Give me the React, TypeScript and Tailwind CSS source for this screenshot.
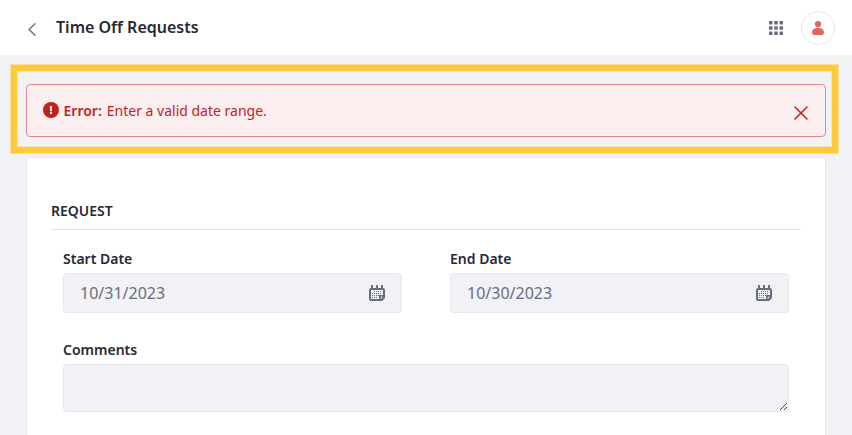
import React from "react";

const GRID = [0, 5.25, 10.5];
const DOT_ROWS: number[][] = [
  [5, 7, 9, 11],
  [3, 5, 7, 9, 11],
  [3, 5, 7, 9],
  [3, 5, 7],
];

function CalendarIcon() {
  return (
    <svg width="16" height="16" viewBox="0 0 16 16" aria-hidden="true">
      <path
        d="M2 .5a.5.5 0 0 1 .5-.5h1a.5.5 0 0 1 .5.5V3h3V.5a.5.5 0 0 1 .5-.5h1a.5.5 0 0 1 .5.5V3h3V.5a.5.5 0 0 1 .5-.5h1a.5.5 0 0 1 .5.5V3a2 2 0 0 1 2 2v8l-3 3H2a2 2 0 0 1-2-2V5a2 2 0 0 1 2-2z"
        fill="#6b6c7e"
      />
      <path d="M2 5h12v5h-4v4H2z" fill="#f1f2f5" />
      <path d="M11.700 11.700h2.300l-2.300 2.300z" fill="#f1f2f5" />
      {DOT_ROWS.map((row, r) =>
        row.map((x) => <rect key={`${r}-${x}`} x={x} y={6 + r * 2} width="1" height="1" fill="#6b6c7e" />),
      )}
    </svg>
  );
}

function DateField({ label, value }: { label: string; value: string }) {
  return (
    <div className="w-[339px]">
      <label className="block h-[21px] text-[14px] leading-[21px] font-semibold">{label}</label>
      <div className="mt-1 flex h-10 items-center justify-between rounded-[4px] border border-[#e7e7ed] bg-[#f1f2f5] px-4 text-[16px] text-[#6b6c7e]">
        <span>{value}</span>
        <CalendarIcon />
      </div>
    </div>
  );
}

export default function App() {
  return (
    <div className="h-[435px] w-[852px] overflow-hidden bg-[#f1f2f5] font-['Noto_Sans',sans-serif] text-[#272833]">
      <header className="flex h-[55px] items-center bg-white pr-[17px] pl-7">
        <svg className="mt-[3px]" width="8" height="13" viewBox="0 0 8 13" fill="none" stroke="#6b6c7e" strokeWidth="1.4" strokeLinecap="round">
          <path d="M7 .8 1 6.5l6 5.7" />
        </svg>
        <h1 className="mb-[2px] ml-5 text-[16px] leading-6 font-semibold">Time Off Requests</h1>
        <svg className="mt-px ml-auto" width="14" height="14" viewBox="0 0 14 14" fill="#6b6c7e">
          {GRID.map((y) => GRID.map((x) => <rect key={`${x}-${y}`} x={x} y={y} width="3.5" height="3.5" rx=".3" />))}
        </svg>
        <div className="ml-[18px] flex size-[34px] items-center justify-center rounded-full border border-[#e7e7ed]">
          <svg width="12" height="14" viewBox="0 0 12 14" fill="#e5655d">
            <circle cx="6" cy="3.1" r="3.1" />
            <path d="M0 11.2C0 8.5 2.7 7 6 7s6 1.5 6 4.2c0 1.9-1 2.8-2.5 2.8h-7C1 14 0 13.100 0 11.200z" />
          </svg>
        </div>
      </header>

      <div className="mt-[10px] mr-[14px] ml-[11px] h-[88px] border-[6px] border-[#ffca38] pt-[13px] pr-[6px] pl-[9px] shadow-[0_0_0_1px_#f8dea0,inset_0_0_0_1px_#f8e4b4]">
        <div role="alert" className="flex h-[53px] items-center rounded-[4px] border border-[#e3868a] bg-[#fbeeee] pr-[17px] pl-4 text-[14px] leading-[21px] text-[#c02428]">
          <svg className="mb-px" width="16" height="16" viewBox="0 0 16 16" fill="#c31f1d">
            <circle cx="8" cy="8" r="8" />
            <path d="M6.800 4h2.400L8.900 9.200H7.100z" fill="white" />
            <circle cx="8" cy="11" r="1.200" fill="white" />
          </svg>
          <strong className="ml-[4.5px] font-semibold">Error:</strong>
          <span className="ml-[5px]">Enter a valid date range.</span>
          <svg className="mt-1 ml-auto" width="14" height="14" viewBox="0 0 14 14" fill="none" stroke="#c31f1d" strokeWidth="1.500" strokeLinecap="round">
            <path d="m1 1 12 12M13 1 1 13" />
          </svg>
        </div>
      </div>

      <main className="mx-[26px] mt-1 h-[300px] rounded-[4px] border border-[#e7e7ed] bg-white px-6 pt-[42px]">
        <h2 className="h-[30px] border-b border-[#e2e2e6] text-[14px] leading-[21px] font-semibold">REQUEST</h2>
        <div className="mt-[18px] flex justify-between px-3">
          <DateField label="Start Date" value="10/31/2023" />
          <DateField label="End Date" value="10/30/2023" />
        </div>
        <div className="mt-[26px] px-3">
          <label className="block h-[21px] text-[14px] leading-[21px] font-semibold">Comments</label>
          <div className="mt-1 flex h-12 items-end justify-end rounded-[4px] border border-[#e7e7ed] bg-[#f1f2f5] p-[1px]">
            <svg width="7" height="7" viewBox="0 0 7 7" fill="#44454d" shapeRendering="crispEdges">
              {[0, 1, 2, 3, 4, 5, 6].map((i) => <rect key={`long-${i}`} x={i} y={6 - i} width="1" height="1" />)}
              {[0, 1, 2].map((i) => <rect key={`short-${i}`} x={4 + i} y={6 - i} width="1" height="1" />)}
            </svg>
          </div>
        </div>
      </main>
    </div>
  );
}
